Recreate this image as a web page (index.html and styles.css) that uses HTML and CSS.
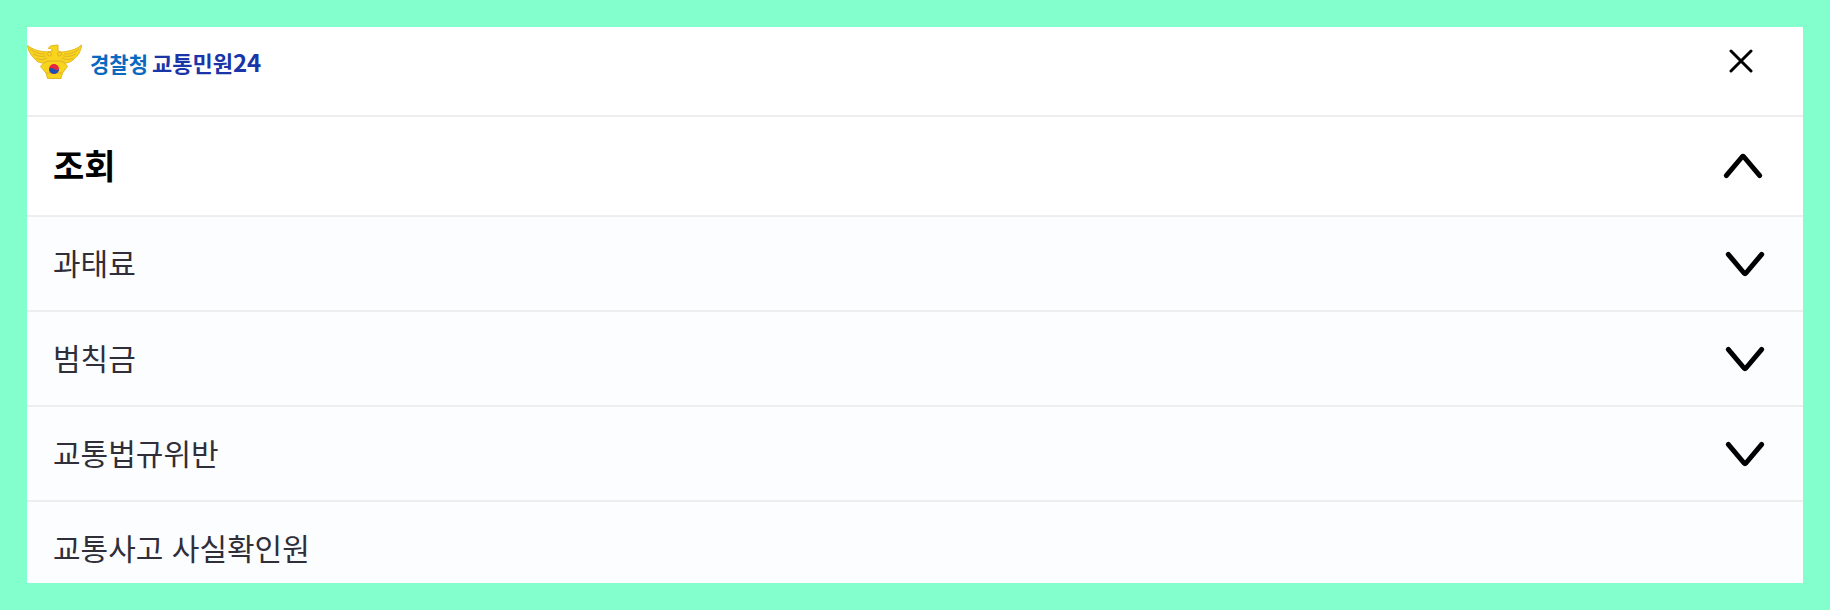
FILE: index.html
```
<!DOCTYPE html>
<html lang="ko">
<head>
    <meta charset="UTF-8">
    <meta name="viewport" content="width=device-width, initial-scale=1.0">
    <title>경찰청 교통민원24</title>
    <link rel="stylesheet" href="styles.css">
</head>
<body>
    <div class="panel">
        <header class="header">
            <a class="logo" href="#">
                <svg class="emblem" viewBox="0 0 56 36" aria-hidden="true">
                    <path class="gold" d="M0.5 1.5C5 5 10 7 16 7.500C19 8 22 8 25 7C25 5.500 24.500 5 23.500 4.500L21.500 4.500C22 2.500 24 1.500 26 1.500L31 1V6.500C33 8.500 36 8 39 7.500C45 6.500 51 4.500 54.500 1C54 7 51 12 47 15C44 18 41 19 38 19L40.500 22.500L35.500 29L34 34.500H20.500L19 29L13.500 22.500L16.500 19C12 19 9 17 7 14C3 10 1 6 0.500 1.500Z"/>
                    <path class="feather" d="M3 5C8 9 13 10 18 10M6 10C10 12 14 13 19 12M9 14C12 16 16 16 20 14M52 5C47 9 42 10 37 10M49 10C45 12 41 13 36 12M46 14C43 16 39 16 35 14M16.500 19L21 17H34L38 19M19 29H35"/>
                    <circle class="feather" cx="22.500" cy="10" r="2"/>
                    <circle class="feather" cx="32.500" cy="10" r="2"/>
                    <circle class="red" cx="27" cy="25" r="5"/>
                    <path class="blue" d="M22 25C23.500 23.500 25.500 24 27 25C28.500 26.500 30.500 26.500 32 25A5 5 0 0 1 22 25Z"/>
                </svg>
                <span class="logo-text"><span class="agency">경찰청</span><span class="service">교통민원<span class="number">24</span></span></span>
            </a>
            <button type="button" class="close" aria-label="닫기">
                <svg class="close-icon" viewBox="0 0 24 24" aria-hidden="true"><path d="M2 2L22 22M22 2L2 22"/></svg>
            </button>
        </header>
        <nav>
            <button type="button" class="row title" aria-expanded="true">
                <span class="label">조회</span>
                <svg class="chevron" viewBox="0 0 38 24" aria-hidden="true"><path d="M2.300 21.700L18 3Q19 2 20 3L35.700 21.700"/></svg>
            </button>
            <button type="button" class="row" aria-expanded="false">
                <span class="label">과태료</span>
                <svg class="chevron" viewBox="0 0 38 24" aria-hidden="true"><path d="M2.300 2.300L18 21Q19 22 20 21L35.700 2.300"/></svg>
            </button>
            <button type="button" class="row" aria-expanded="false">
                <span class="label">범칙금</span>
                <svg class="chevron" viewBox="0 0 38 24" aria-hidden="true"><path d="M2.300 2.300L18 21Q19 22 20 21L35.700 2.300"/></svg>
            </button>
            <button type="button" class="row" aria-expanded="false">
                <span class="label">교통법규위반</span>
                <svg class="chevron" viewBox="0 0 38 24" aria-hidden="true"><path d="M2.300 2.300L18 21Q19 22 20 21L35.700 2.300"/></svg>
            </button>
            <a class="row" href="#"><span class="label">교통사고 사실확인원</span></a>
        </nav>
    </div>
</body>
</html>
```

FILE: styles.css
```
* {
    box-sizing: border-box;
}
body {
    margin: 0;
    padding: 27px;
    height: 100vh;
    background-color: #83ffce;
    font-family: "Noto Sans CJK KR", sans-serif;
}
.panel {
    height: 100%;
    overflow: hidden;
    background-color: #fff;
}
.header {
    display: flex;
    justify-content: space-between;
    align-items: flex-start;
    height: 90px;
    padding: 11px 39px 0 0;
    border-bottom: 2px solid #eeeeee;
}
.logo {
    display: flex;
    align-items: center;
    gap: 7px;
    height: 48px;
    text-decoration: none;
}
.emblem {
    width: 56px;
    height: 36px;
}
.gold {
    fill: #f8d51c;
    stroke: #e3b822;
}
.feather {
    fill: none;
    stroke: #dfb02a;
}
.red {
    fill: #e5273f;
}
.blue {
    fill: #1d4fb5;
}
.logo-text {
    display: flex;
    align-items: baseline;
    gap: 4px;
    font-size: 22px;
    font-weight: 700;
    line-height: 32px;
}
.agency {
    color: #0969c0;
    font-size: 21px;
}
.service {
    color: #1a35a8;
}
.number {
    font-size: 24px;
}
.close {
    display: flex;
    justify-content: center;
    align-items: center;
    width: 46px;
    height: 46px;
    padding: 0;
    border: none;
    background: none;
    cursor: pointer;
}
.close-icon {
    width: 24px;
    height: 24px;
    fill: none;
    stroke: #000;
    stroke-width: 3;
    stroke-linecap: round;
}
.row {
    display: flex;
    justify-content: space-between;
    align-items: center;
    width: 100%;
    height: 95px;
    padding: 0 39px 0 26px;
    border: none;
    border-bottom: 2px solid #eeeeee;
    background-color: #fcfdff;
    color: #302e38;
    font-family: inherit;
    font-size: 30px;
    text-align: left;
    text-decoration: none;
    cursor: pointer;
}
.title {
    height: 100px;
    padding-right: 41px;
    background-color: #fff;
    color: #000;
    font-size: 34px;
    font-weight: 700;
}
.label {
    padding-bottom: 4px;
}
.chevron {
    width: 38px;
    height: 24px;
    overflow: visible;
    fill: none;
    stroke: #000;
    stroke-width: 5;
    stroke-linecap: round;
    stroke-linejoin: round;
}
```
